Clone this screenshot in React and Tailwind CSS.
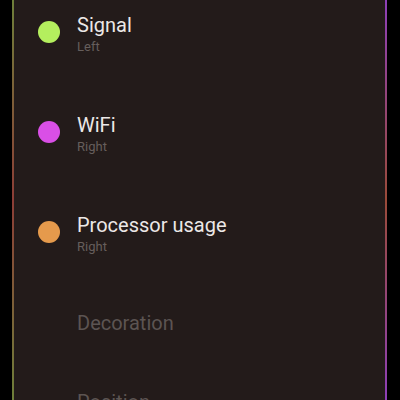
import React from 'react';

const rows = [
  { title: 'Signal', sub: 'Left', color: 'bg-[#b4ef5e]' },
  { title: 'WiFi', sub: 'Right', color: 'bg-[#d94fe6]' },
  { title: 'Processor usage', sub: 'Right', color: 'bg-[#e59a4c]' },
];

const App = () => {
  return (
    <div className="flex w-[400px] h-[400px] overflow-hidden bg-black" style={{ fontFamily: 'Roboto, "Noto Sans", sans-serif' }}>
      <div className="w-[12px] shrink-0" />
      <div className="w-[2px] shrink-0 bg-[linear-gradient(to_bottom,#6e7f3a,#8c3d36_50%,#6e7f3a)]" />
      <div className="w-[371px] shrink-0 bg-[#231b1a]">
        {rows.map(r => (
          <div key={r.title} className="h-[100px] flex items-start pt-[13px] pl-[24px]">
            <span className={`w-[22px] h-[22px] mt-[8px] rounded-full ${r.color}`} />
            <div className="ml-[17px] flex flex-col">
              <span className="text-[20px] leading-[24px] text-[#ece8e7]">{r.title}</span>
              <span className="text-[13px] leading-[16px] mt-[2px] text-[#665e5c]">{r.sub}</span>
            </div>
          </div>
        ))}
        <div className="pl-[63px] pt-[11px] h-[90px]">
          <span className="text-[20px] leading-[24px] text-[#5c5452]">Decoration</span>
        </div>
        <div className="pl-[63px]">
          <span className="text-[20px] leading-[24px] text-[#5c5452]">Position</span>
        </div>
      </div>
      <div className="w-[2px] shrink-0 bg-[linear-gradient(to_bottom,#8d3fb8,#9a4a38_50%,#8d3fb8)]" />
      <div className="w-[13px] shrink-0" />
    </div>
  );
};

export default App;
